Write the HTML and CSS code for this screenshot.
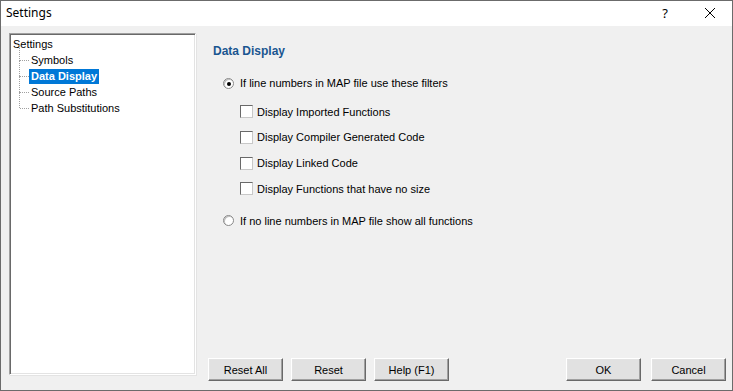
FILE: index.html
```html
<!DOCTYPE html>
<html>
<head>
<meta charset="utf-8">
<link rel="stylesheet" href="styles.css">
</head>
<body>
<div class="window">
  <div class="titlebar">
    <span class="title">Settings</span>
    <span class="tb-help">?</span>
    <span class="tb-close">
      <svg width="12" height="12" viewBox="0 0 12 12"><path d="M1 1 L11 11 M11 1 L1 11" stroke="#000" stroke-width="1" fill="none"/></svg>
    </span>
  </div>
  <div class="body">
    <div class="tree">
      <div class="tree-root">Settings</div>
      <div class="tree-children">
        <div class="tree-item"><span class="dots"></span><span class="label">Symbols</span></div>
        <div class="tree-item"><span class="dots"></span><span class="label selected">Data Display</span></div>
        <div class="tree-item"><span class="dots"></span><span class="label">Source Paths</span></div>
        <div class="tree-item last"><span class="dots"></span><span class="label">Path Substitutions</span></div>
      </div>
    </div>
    <div class="panel">
      <div class="content">
        <div class="heading">Data Display</div>
        <div class="option radio-row first">
          <span class="radio checked"></span><span>If line numbers in MAP file use these filters</span>
        </div>
        <div class="checks">
          <div class="option check-row"><span class="check"></span><span>Display Imported Functions</span></div>
          <div class="option check-row"><span class="check"></span><span>Display Compiler Generated Code</span></div>
          <div class="option check-row"><span class="check"></span><span>Display Linked Code</span></div>
          <div class="option check-row"><span class="check"></span><span>Display Functions that have no size</span></div>
        </div>
        <div class="option radio-row">
          <span class="radio"></span><span>If no line numbers in MAP file show all functions</span>
        </div>
      </div>
      <div class="buttons">
        <div class="btn-group">
          <button class="btn">Reset All</button>
          <button class="btn">Reset</button>
          <button class="btn">Help (F1)</button>
        </div>
        <div class="btn-group right">
          <button class="btn">OK</button>
          <button class="btn">Cancel</button>
        </div>
      </div>
    </div>
  </div>
</div>
</body>
</html>
```
FILE: styles.css
```css
html, body {
  margin: 0;
  padding: 0;
  background: #f0f0f0;
}
body {
  font-family: "Liberation Sans", Arial, sans-serif;
  font-size: 11px;
  color: #000;
}
.window {
  width: 733px;
  height: 391px;
  box-sizing: border-box;
  border: 1px solid #6b6b6b;
  display: flex;
  flex-direction: column;
  background: #f0f0f0;
}
.titlebar {
  height: 25px;
  flex: none;
  background: #fff;
  display: flex;
  align-items: center;
  position: relative;
}
.title {
  font-family: "Noto Sans", "Open Sans", sans-serif;
  font-size: 12px;
  padding-left: 5px;
  padding-bottom: 2px;
}
.tb-help {
  font-family: "Noto Sans", sans-serif;
  font-size: 13px;
  margin-left: auto;
  margin-right: 36px;
  padding-bottom: 2px;
}
.tb-close {
  display: flex;
  margin-right: 16px;
  padding-bottom: 1px;
}
.body {
  flex: 1;
  display: flex;
  padding: 7px 0 0 8px;
}
.tree {
  width: 187px;
  height: 342px;
  box-sizing: border-box;
  background: #fff;
  border-top: 1px solid #a0a0a0;
  border-left: 1px solid #a0a0a0;
  border-right: 1px solid #fff;
  border-bottom: 1px solid #fff;
  box-shadow: inset 1px 1px 0 #696969, inset -1px -1px 0 #e3e3e3, 1px 1px 0 #e3e3e3;
  padding: 3px 0 0 2px;
}
.tree-root {
  height: 15px;
  line-height: 15px;
  padding-left: 1px;
}
.tree-children {
  position: relative;
  padding-left: 17px;
}
.tree-item {
  height: 16px;
  display: flex;
  align-items: center;
  position: relative;
}
.tree-item::before {
  content: "";
  position: absolute;
  left: -10px;
  top: -8px;
  height: 16px;
  border-left: 1px dotted #a0a0a0;
}
.tree-item:first-child::before {
  top: -7px;
}
.dots {
  position: absolute;
  left: -9px;
  top: 8px;
  width: 9px;
  border-top: 1px dotted #a0a0a0;
}
.label {
  padding: 0 2px 0 2px;
  line-height: 15px;
  height: 15px;
}
.label.selected {
  background: #0078d7;
  color: #fff;
  font-weight: bold;
}
.panel {
  flex: 1;
  display: flex;
  flex-direction: column;
}
.content {
  flex: 1;
  padding: 10px 0 0 17px;
}
.heading {
  font-weight: bold;
  font-size: 12px;
  color: #1a5690;
  height: 16px;
  line-height: 16px;
}
.option {
  display: flex;
  align-items: center;
  height: 16px;
}
.radio-row.first {
  margin-top: 16px;
  margin-left: 10px;
}
.radio-row {
  margin-left: 10px;
  margin-top: 16px;
}
.radio {
  width: 11px;
  height: 11px;
  box-sizing: border-box;
  border-radius: 50%;
  border: 1px solid #888;
  background: #fff;
  margin-right: 6px;
  position: relative;
  box-shadow: inset 1px 1px 0 #c0c0c0;
}
.radio.checked::after {
  content: "";
  position: absolute;
  left: 3px;
  top: 3px;
  width: 4px;
  height: 4px;
  border-radius: 50%;
  background: #000;
}
.checks {
  padding-left: 27px;
  padding-top: 3px;
}
.check-row {
  margin-top: 9.8px;
}
.check-row:first-child {
  margin-top: 9.6px;
}
.check {
  width: 13px;
  height: 13px;
  box-sizing: border-box;
  background: #fff;
  border-top: 1px solid #696969;
  border-left: 1px solid #696969;
  border-right: 1px solid #c8c8c8;
  border-bottom: 1px solid #c8c8c8;
  margin-right: 4px;
}
.buttons {
  display: flex;
  justify-content: space-between;
  padding: 0 6px 9px 12px;
}
.btn-group {
  display: flex;
  gap: 8px;
}
.btn-group.right {
  gap: 10px;
}
.btn {
  width: 75px;
  height: 23px;
  box-sizing: border-box;
  font-family: "Liberation Sans", Arial, sans-serif;
  font-size: 11px;
  color: #000;
  background: #e1e1e1;
  border-top: 1px solid #fff;
  border-left: 1px solid #fff;
  border-right: 1px solid #696969;
  border-bottom: 1px solid #696969;
  box-shadow: inset -1px -1px 0 #a0a0a0, inset 1px 1px 0 #e3e3e3;
  padding: 0;
  margin: 0;
}
```
